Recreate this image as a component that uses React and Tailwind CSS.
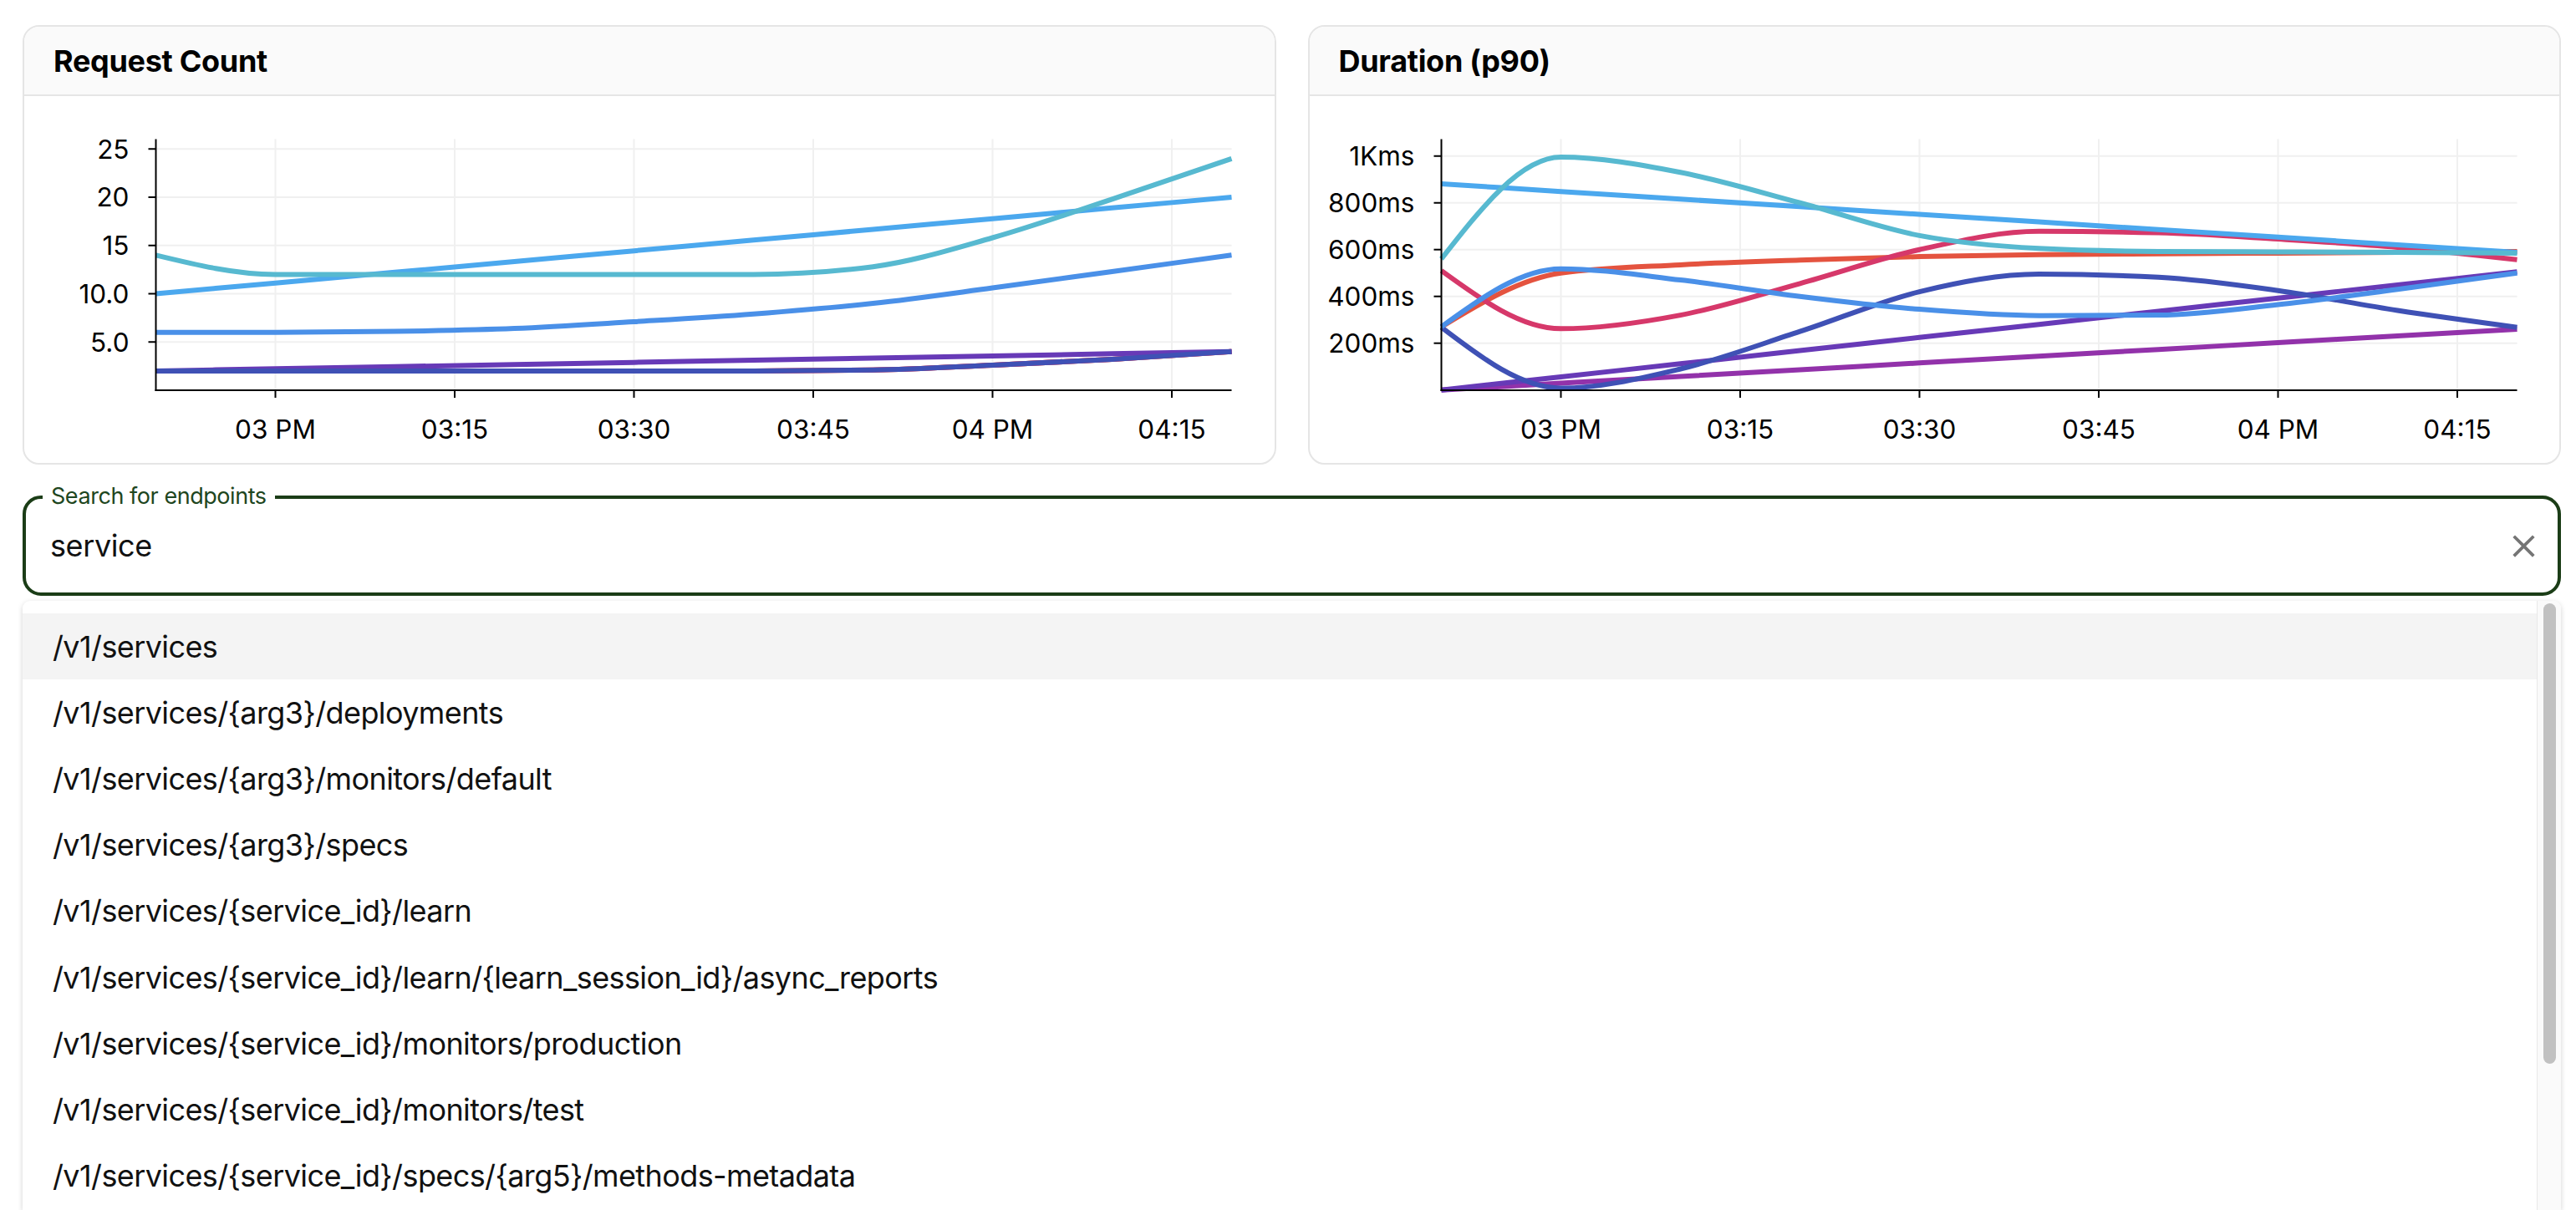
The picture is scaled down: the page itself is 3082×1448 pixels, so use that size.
import React from 'react';

const X0 = 157.5;
const X1 = 1444.5;
const AXIS_Y = 352;
const AXIS_TOP = 51.5;
const mins = [0, 10, 20, 30, 40, 50, 60, 70, 80, 90];
const xOf = (m) => X0 + (m * (X1 - X0)) / 90;

function linear(a, b) {
  return mins.map((m) => a + ((b - a) * m) / 90);
}

function monotonePath(pts) {
  const n = pts.length;
  const xs = pts.map((p) => p[0]);
  const ys = pts.map((p) => p[1]);
  const t = new Array(n).fill(0);
  const sign = (v) => (v < 0 ? -1 : 1);
  for (let i = 1; i < n - 1; i++) {
    const h0 = xs[i] - xs[i - 1];
    const h1 = xs[i + 1] - xs[i];
    const s0 = (ys[i] - ys[i - 1]) / h0;
    const s1 = (ys[i + 1] - ys[i]) / h1;
    const p = (s0 * h1 + s1 * h0) / (h0 + h1);
    t[i] = (sign(s0) + sign(s1)) * Math.min(Math.abs(s0), Math.abs(s1), 0.5 * Math.abs(p)) || 0;
  }
  const h = xs[1] - xs[0];
  t[0] = (3 * (ys[1] - ys[0]) / h - t[1]) / 2;
  const hn = xs[n - 1] - xs[n - 2];
  t[n - 1] = (3 * (ys[n - 1] - ys[n - 2]) / hn - t[n - 2]) / 2;
  let d = `M${xs[0]},${ys[0]}`;
  for (let i = 0; i < n - 1; i++) {
    const dx = (xs[i + 1] - xs[i]) / 3;
    d += ` C${xs[i] + dx},${ys[i] + dx * t[i]} ${xs[i + 1] - dx},${ys[i + 1] - dx * t[i + 1]} ${xs[i + 1]},${ys[i + 1]}`;
  }
  return d;
}

const C = {
  red: '#e4533f',
  pink: '#d6386a',
  magenta: '#9232aa',
  purple: '#673ab7',
  indigo: '#3f51b5',
  blue: '#4a90e8',
  light: '#4ba8ee',
  teal: '#57b9d0',
};

const indigoLeft = [2, 2, 2, 2, 2, 2, 2.1, 2.6, 3.2, 4];

const leftSeries = [
  { c: C.red, v: indigoLeft },
  { c: C.pink, v: indigoLeft },
  { c: C.purple, v: linear(2, 4) },
  { c: C.indigo, v: indigoLeft },
  { c: C.blue, v: [6, 6, 6.1, 6.4, 7.1, 7.9, 9.0, 10.6, 12.3, 14] },
  { c: C.light, v: linear(10, 20) },
  { c: C.teal, v: [14, 12, 12, 12, 12, 12, 12.8, 15.8, 19.8, 24] },
];

const rightSeries = [
  { c: C.red, v: [270, 500, 535, 555, 570, 578, 582, 585, 588, 592] },
  { c: C.pink, v: [510, 262, 320, 455, 600, 678, 672, 645, 610, 557] },
  { c: C.magenta, v: linear(0, 260) },
  { c: C.purple, v: linear(0, 505) },
  { c: C.indigo, v: [268, 8, 90, 250, 420, 495, 482, 425, 340, 268] },
  { c: C.blue, v: [270, 518, 470, 400, 345, 318, 320, 365, 430, 500] },
  { c: C.light, v: linear(881, 588) },
  { c: C.teal, v: [560, 995, 930, 800, 660, 605, 592, 590, 588, 585] },
];

const xTicks = [
  { m: 10, l: '03 PM' },
  { m: 25, l: '03:15' },
  { m: 40, l: '03:30' },
  { m: 55, l: '03:45' },
  { m: 70, l: '04 PM' },
  { m: 85, l: '04:15' },
];

function Chart({ yTicks, yOf, series }) {
  return (
    <svg width="100%" height="439" className="block">
      {yTicks.map((t) => (
        <line key={'gy' + t.l} x1={X0} x2={X1} y1={yOf(t.v)} y2={yOf(t.v)} stroke="#f0f0f0" strokeWidth="2" />
      ))}
      {xTicks.map((t) => (
        <line key={'gx' + t.l} x1={xOf(t.m)} x2={xOf(t.m)} y1={AXIS_TOP} y2={AXIS_Y} stroke="#f0f0f0" strokeWidth="2" />
      ))}
      {series.map((s, i) => (
        <path
          key={i}
          d={monotonePath(s.v.map((v, j) => [xOf(mins[j]), yOf(v)]))}
          fill="none"
          stroke={s.c}
          strokeWidth="6"
        />
      ))}
      <line x1={X0} x2={X0} y1={AXIS_TOP} y2={AXIS_Y + 1} stroke="#000" strokeWidth="2" />
      <line x1={X0 - 1} x2={X1} y1={AXIS_Y} y2={AXIS_Y} stroke="#000" strokeWidth="2" />
      {yTicks.map((t) => (
        <g key={'ty' + t.l}>
          <line x1={X0 - 9} x2={X0} y1={yOf(t.v)} y2={yOf(t.v)} stroke="#000" strokeWidth="2" />
          <text x={125.5} y={yOf(t.v) + 11.3} textAnchor="end" fontSize="31.5" fill="#000">
            {t.l}
          </text>
        </g>
      ))}
      {xTicks.map((t) => (
        <g key={'tx' + t.l}>
          <line x1={xOf(t.m)} x2={xOf(t.m)} y1={AXIS_Y} y2={AXIS_Y + 9} stroke="#000" strokeWidth="2" />
          <text x={xOf(t.m)} y={409.5} textAnchor="middle" fontSize="31.5" fill="#000">
            {t.l}
          </text>
        </g>
      ))}
    </svg>
  );
}

function Card({ title, children }) {
  return (
    <div className="flex-1 h-[526px] flex flex-col border-2 border-[#e5e5e5] rounded-[20px] overflow-hidden bg-white">
      <div className="h-[83px] shrink-0 bg-[#fafafa] border-b-2 border-[#e5e5e5] flex items-center px-[35px]">
        <span className="text-[36px] font-bold tracking-[-0.3px] text-black">{title}</span>
      </div>
      <div className="flex-1 overflow-hidden">{children}</div>
    </div>
  );
}

const items = [
  '/v1/services',
  '/v1/services/{arg3}/deployments',
  '/v1/services/{arg3}/monitors/default',
  '/v1/services/{arg3}/specs',
  '/v1/services/{service_id}/learn',
  '/v1/services/{service_id}/learn/{learn_session_id}/async_reports',
  '/v1/services/{service_id}/monitors/production',
  '/v1/services/{service_id}/monitors/test',
  '/v1/services/{service_id}/specs/{arg5}/methods-metadata',
];

export default function App() {
  return (
    <div className="w-[3082px] h-[1448px] overflow-hidden bg-white flex flex-col pl-[27px] pr-[18px] pt-[30px] font-[Inter,sans-serif] text-[#111]">
      <div className="flex gap-[38px]">
        <Card title="Request Count">
          <Chart
            yOf={(v) => AXIS_Y - v * 11.55}
            yTicks={[
              { v: 5, l: '5.0' },
              { v: 10, l: '10.0' },
              { v: 15, l: '15' },
              { v: 20, l: '20' },
              { v: 25, l: '25' },
            ]}
            series={leftSeries}
          />
        </Card>
        <Card title="Duration (p90)">
          <Chart
            yOf={(v) => AXIS_Y - 0.3 - v * 0.28}
            yTicks={[
              { v: 200, l: '200ms' },
              { v: 400, l: '400ms' },
              { v: 600, l: '600ms' },
              { v: 800, l: '800ms' },
              { v: 1000, l: '1Kms' },
            ]}
            series={rightSeries}
          />
        </Card>
      </div>

      <div className="relative mt-[37px] h-[120px] shrink-0 border-4 border-[#1b3d17] rounded-[22px] flex items-center pl-[29px] pr-[18px]">
        <span className="absolute left-[20px] top-[-18px] px-[10px] bg-white text-[27px] leading-[30px] tracking-[-0.45px] text-[#1e4620]">
          Search for endpoints
        </span>
        <span className="flex-1 text-[36px] tracking-[-0.4px] text-[#111]">service</span>
        <svg width="45" height="45" viewBox="0 0 24 24" className="shrink-0">
          <path
            fill="#757575"
            d="M19 6.41 17.59 5 12 10.59 6.41 5 5 6.41 10.59 12 5 17.59 6.41 19 12 13.41 17.59 19 19 17.59 13.41 12z"
          />
        </svg>
      </div>

      <div className="mt-[6px] flex-1 flex rounded-t-[9px] bg-white shadow-[0_2px_6px_rgba(0,0,0,0.18)] overflow-hidden">
        <div className="flex-1 pt-[15px]">
          {items.map((it, i) => (
            <div
              key={it}
              className={`h-[79.2px] flex items-center pl-[36px] text-[36px] tracking-[-0.6px] text-[#111] ${i === 0 ? 'bg-[#f4f4f4]' : ''}`}
            >
              {it}
            </div>
          ))}
        </div>
        <div className="w-[29px] shrink-0 border-l border-[#e8e8e8] bg-[#fafafa]">
          <div className="mt-[3px] ml-[7px] w-[15px] h-[551px] rounded-full bg-[#c1c1c1]" />
        </div>
      </div>
    </div>
  );
}
